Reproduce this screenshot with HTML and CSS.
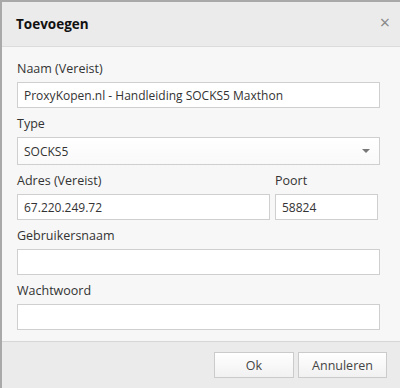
FILE: index.html
```html
<!DOCTYPE html>
<html lang="nl">
<head>
  <meta charset="UTF-8">
  <meta name="viewport" content="width=device-width, initial-scale=1">
  <title>Toevoegen</title>
  <link rel="stylesheet" href="styles.css">
</head>
<body>
  <div class="dialog">
    <div class="dialog-head">
      <h3>Toevoegen</h3>
      <span class="close">&times;</span>
    </div>

    <div class="dialog-body">
      <div class="field">
        <label>Naam (Vereist)</label>
        <input type="text" value="ProxyKopen.nl - Handleiding SOCKS5 Maxthon">
      </div>
      <div class="field">
        <label>Type</label>
        <div class="select">
          <span>SOCKS5</span>
          <span class="caret"></span>
        </div>
      </div>
      <div class="field row">
        <div>
          <label>Adres (Vereist)</label>
          <input type="text" value="67.220.249.72">
        </div>
        <div>
          <label>Poort</label>
          <input type="text" value="58824">
        </div>
      </div>
      <div class="field">
        <label>Gebruikersnaam</label>
        <input type="text">
      </div>
      <div class="field">
        <label>Wachtwoord</label>
        <input type="password">
      </div>
    </div>

    <div class="dialog-foot">
      <button class="ok">Ok</button>
      <button class="cancel">Annuleren</button>
    </div>
  </div>
</body>
</html>
```

FILE: styles.css
```css
body {
  margin: 0;
  padding: 0;
  background: #fff;
  font-family: 'Segoe UI', 'Open Sans', sans-serif;
  font-size: 12px;
  color: #333;
}

.dialog {
  width: 400px;
  height: 388px;
  border-top: 2px solid #a9a9a9;
  border-left: 2px solid #a9a9a9;
  box-sizing: border-box;
  background: #f7f7f7;
  overflow: hidden;
}

.dialog-head {
  display: flex;
  justify-content: space-between;
  align-items: center;
  height: 44px;
  padding: 0 10px 0 14px;
  background: #ebebeb;
  border-bottom: 1px solid #dcdcdc;
}

.dialog-head h3 {
  margin: 0;
  font-size: 13.5px;
  font-weight: bold;
  color: #111;
}

.close {
  font-size: 18px;
  line-height: 18px;
  color: #888;
  margin-top: -4px;
}

.dialog-body {
  padding: 13px 20px 11px 15px;
  border-bottom: 1px solid #d6d6d6;
}

.field {
  margin-bottom: 7px;
}

.field:last-child {
  margin-bottom: 0;
}

.field label {
  display: block;
  font-size: 12.5px;
  line-height: 18px;
  margin-bottom: 4px;
}

.field input,
.select {
  display: block;
  box-sizing: border-box;
  width: 100%;
  height: 26px;
  margin: 0;
  padding: 0 6px;
  border: 1px solid #cfcfcf;
  background: #fff;
  font-family: inherit;
  font-size: 12px;
  color: #333;
  outline: none;
}

.select {
  display: flex;
  justify-content: space-between;
  align-items: center;
  height: 28px;
  padding: 0 9px 0 6px;
  background: linear-gradient(#fff, #f9f9f9);
}

.caret {
  width: 0;
  height: 0;
  border-left: 4px solid transparent;
  border-right: 4px solid transparent;
  border-top: 4px solid #777;
}

.row {
  display: grid;
  grid-template-columns: 253px 103px;
  column-gap: 5px;
}

.dialog-foot {
  display: flex;
  justify-content: flex-end;
  gap: 4px;
  padding: 10px 13px 0 0;
  height: 46px;
  background: #ebebeb;
}

.dialog-foot button {
  height: 26px;
  border: 1px solid #cbcbcb;
  background: linear-gradient(#fff, #f1f1f1);
  font-family: inherit;
  font-size: 12.5px;
  color: #444;
  cursor: pointer;
}

.ok {
  width: 80px;
}

.cancel {
  width: 89px;
}
```
